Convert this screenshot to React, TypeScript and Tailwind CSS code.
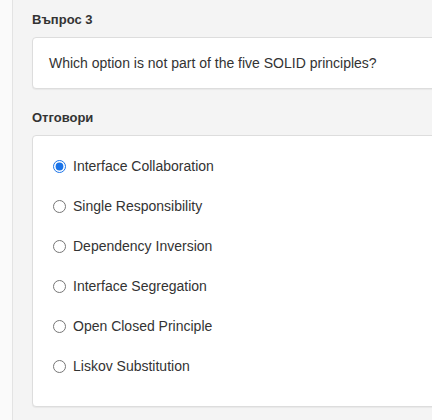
import React from "react";

const options = [
  "Interface Collaboration",
  "Single Responsibility",
  "Dependency Inversion",
  "Interface Segregation",
  "Open Closed Principle",
  "Liskov Substitution",
];

export default function App() {
  return (
    <div
      className="w-[432px] h-[420px] overflow-hidden bg-[#fafafa] pl-[12px] text-[#333333]"
      style={{ fontFamily: '"Liberation Sans", Arial, sans-serif' }}
    >
      <div className="h-full border-l border-[#e3e3e3] bg-[#f4f4f4] pl-[19px] pt-[11px]">
        <div className="text-[13px] font-bold leading-[18px]">Въпрос 3</div>
        <div className="mt-[8px] w-[420px] h-[52px] flex items-center rounded-[4px] border border-[#dddddd] bg-white pl-[16px] shadow-[0_1px_1px_rgba(0,0,0,0.05)] text-[14px]">
          Which option is not part of the five SOLID principles?
        </div>
        <div className="mt-[20px] text-[13px] font-bold leading-[18px]">Отговори</div>
        <div className="mt-[8px] w-[420px] h-[272px] rounded-[4px] border border-[#dddddd] bg-white pl-[20px] pt-[10px] shadow-[0_1px_1px_rgba(0,0,0,0.05)]">
          {options.map((o, i) => (
            <label key={o} className="flex items-center h-[40px] text-[14px]">
              <input
                type="radio"
                name="ans"
                defaultChecked={i === 0}
                className="m-0 w-[13px] h-[13px] accent-[#1a73e8]"
              />
              <span className="ml-[7px]">{o}</span>
            </label>
          ))}
        </div>
      </div>
    </div>
  );
}
